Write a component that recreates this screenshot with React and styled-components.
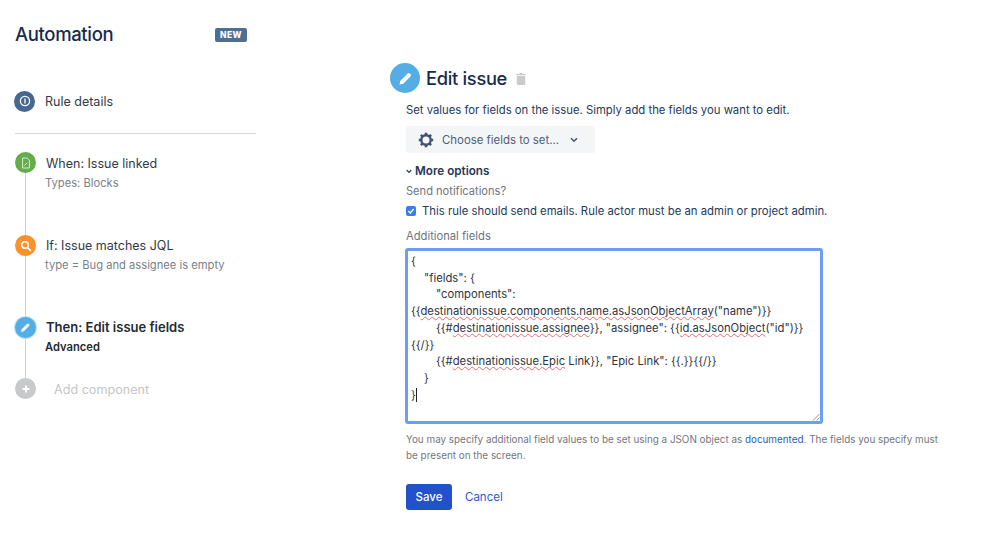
import React from "react";
import styled, { createGlobalStyle } from "styled-components";

const Global = createGlobalStyle`
  html, body { margin: 0; padding: 0; background: #fff; }
  body { font-family: Inter, "Liberation Sans", sans-serif; width: 999px; height: 549px; overflow: hidden; }
`;

const Page = styled.div`
  display: flex;
  width: 999px;
  height: 549px;
  background: #fff;
`;

const Sidebar = styled.aside`
  width: 241px;
  margin-left: 15px;
  padding-top: 22px;
  flex: none;
`;

const SideHeader = styled.div`
  display: flex;
  align-items: center;
  justify-content: space-between;
  height: 24px;
  padding-right: 9px;
`;

const AppTitle = styled.h1`
  margin: 0;
  font-size: 18.5px;
  line-height: 24px;
  font-weight: 500;
  letter-spacing: -0.35px;
  color: #172b4d;
`;

const Badge = styled.span`
  width: 32px;
  height: 14px;
  margin-top: 2px;
  border-radius: 2px;
  background: #4d6f94;
  color: #fff;
  font-size: 8.5px;
  line-height: 14px;
  font-weight: 800;
  letter-spacing: 0.4px;
  text-align: center;
`;

const DetailsRow = styled.div`
  display: flex;
  align-items: center;
  gap: 10px;
  margin-top: 44px;
  height: 22px;
  margin-left: -1px;
`;

const Circle = styled.span`
  width: ${(p) => p.$size || 21}px;
  height: ${(p) => p.$size || 21}px;
  border-radius: 50%;
  background: ${(p) => p.$bg};
  box-shadow: ${(p) => (p.$glow ? "0 0 0 1px #bfe0f5" : "none")};
  display: flex;
  align-items: center;
  justify-content: center;
  flex: none;
`;

const DetailsLabel = styled.span`
  font-size: 12.5px;
  color: #333a47;
`;

const Divider = styled.div`
  height: 1px;
  background: #d5d7da;
  margin-top: 21px;
`;

const Steps = styled.div`
  margin-top: 18px;
`;

const Step = styled.div`
  display: grid;
  grid-template-columns: 21px 1fr;
  column-gap: 10px;
  height: ${(p) => p.$h}px;
`;

const Rail = styled.div`
  display: flex;
  flex-direction: column;
  align-items: center;
`;

const Line = styled.div`
  width: 1px;
  flex: 1;
  background: #cfd1d4;
`;

const StepBody = styled.div`
  padding-top: ${(p) => p.$top || 2}px;
`;

const StepTitle = styled.div`
  font-size: ${(p) => (p.$active ? 13 : 12.5)}px;
  line-height: 17px;
  font-weight: ${(p) => (p.$active ? 600 : 400)};
  color: ${(p) => (p.$active ? "#252a33" : "#333a47")};
`;

const StepSub = styled.div`
  font-size: 11.2px;
  line-height: 14px;
  margin-top: 4px;
  margin-left: -1px;
  font-weight: ${(p) => (p.$active ? 600 : 400)};
  color: ${(p) => (p.$active ? "#252a33" : "#7a7f87")};
`;

const AddLabel = styled.div`
  font-size: 12.6px;
  line-height: 21px;
  margin-left: 8px;
  padding-top: 1px;
  color: #c4c6c9;
`;

const Main = styled.main`
  margin-left: 134px;
  padding-top: 63px;
  width: 560px;
  flex: none;
`;

const EditHeader = styled.div`
  display: flex;
  align-items: center;
  gap: 6px;
  height: 30px;
`;

const EditTitle = styled.h2`
  margin: 0;
  font-size: 18.3px;
  font-weight: 500;
  letter-spacing: -0.3px;
  color: #172b4d;
`;

const TrashWrap = styled.span`
  display: flex;
  margin-left: 3px;
  margin-top: 1px;
`;

const Content = styled.div`
  padding-left: 16px;
`;

const Intro = styled.p`
  margin: 9px 0 0;
  font-size: 11.3px;
  line-height: 16px;
  color: #253858;
`;

const ChooseButton = styled.button`
  display: flex;
  align-items: center;
  width: 189px;
  height: 27px;
  margin-top: 8px;
  padding: 0 0 0 12px;
  border: 0;
  border-radius: 3px;
  background: #f4f5f7;
  font: inherit;
  font-size: 11.4px;
  color: #505f79;
`;

const ChooseLabel = styled.span`
  margin-left: 8px;
  margin-right: 11px;
`;

const MoreRow = styled.div`
  display: flex;
  align-items: center;
  gap: 3px;
  margin-top: 10px;
  height: 16px;
  font-size: 11.7px;
  font-weight: 600;
  color: #253858;
`;

const FieldLabel = styled.div`
  font-size: ${(p) => p.$size}px;
  line-height: 16px;
  color: #6f747c;
  margin-top: ${(p) => p.$mt}px;
`;

const CheckRow = styled.label`
  display: flex;
  align-items: center;
  gap: 6px;
  margin-top: 4px;
  height: 16px;
  font-size: 11.35px;
  color: #253858;
`;

const Check = styled.span`
  width: 10px;
  height: 10px;
  border-radius: 2px;
  background: #3b7de9;
  display: flex;
  align-items: center;
  justify-content: center;
`;

const Editor = styled.div`
  position: relative;
  box-sizing: border-box;
  width: 418px;
  height: 176px;
  margin: 4px 0 0 -1px;
  padding: 2px 3px 0 3px;
  border: 3px solid #6b9ff0;
  border-radius: 3px;
  font-size: 11.25px;
  line-height: 16.7px;
  color: #2f3440;
`;

const EditorLine = styled.div`
  padding-left: ${(p) => p.$indent || 0}px;
  white-space: pre;
`;

const Spell = styled.span`
  text-decoration: underline wavy #f0686c 1px;
  text-underline-offset: 1px;
  text-decoration-skip-ink: none;
`;

const Caret = styled.span`
  display: inline-block;
  width: 1px;
  height: 14px;
  background: #222;
  vertical-align: -3px;
`;

const Grip = styled.svg`
  position: absolute;
  right: 0;
  bottom: 0;
`;

const Help = styled.p`
  margin: 7px 0 0;
  width: 540px;
  font-size: 9.9px;
  line-height: 16px;
  color: #72767d;
`;

const HelpLink = styled.a`
  color: #2a5bc7;
  text-decoration: none;
`;

const Actions = styled.div`
  display: flex;
  align-items: center;
  gap: 13px;
  margin-top: 21px;
`;

const SaveButton = styled.button`
  width: 46px;
  height: 26px;
  padding: 0;
  border: 0;
  border-radius: 3px;
  background: #2351c9;
  color: #fff;
  font: inherit;
  font-size: 11.5px;
  font-weight: 500;
`;

const CancelLink = styled.a`
  font-size: 11.5px;
  color: #2a5bc7;
`;

const Pencil = ({ s = 12 }) => (
  <svg width={s} height={s} viewBox="0 0 12 12">
    <path d="M1.2 10.8l.7-3L7.8 1.9a1 1 0 0 1 1.4 0l.9.9a1 1 0 0 1 0 1.4L4.2 10.1z" fill="#fff" />
  </svg>
);

export default function App() {
  return (
    <Page>
      <Global />
      <Sidebar>
        <SideHeader>
          <AppTitle>Automation</AppTitle>
          <Badge>NEW</Badge>
        </SideHeader>
        <DetailsRow>
          <Circle $bg="#46678f">
            <svg width="12" height="12" viewBox="0 0 12 12" fill="none">
              <circle cx="6" cy="6" r="4.6" stroke="#fff" strokeWidth="1.3" />
              <path d="M6 3.6v4.8" stroke="#fff" strokeWidth="1.3" />
            </svg>
          </Circle>
          <DetailsLabel>Rule details</DetailsLabel>
        </DetailsRow>
        <Divider />
        <Steps>
          <Step $h={83}>
            <Rail>
              <Circle $bg="#65ac4a">
                <svg width="12" height="12" viewBox="0 0 12 12" fill="none" stroke="#e6f2e0" strokeWidth="0.9">
                  <path d="M2.6 1h4.6l2.2 2.2V11H2.6z" />
                  <path d="M4.4 8.6l2.8-2.8" />
                </svg>
              </Circle>
              <Line />
            </Rail>
            <StepBody $top={3}>
              <StepTitle>When: Issue linked</StepTitle>
              <StepSub>Types: Blocks</StepSub>
            </StepBody>
          </Step>
          <Step $h={82}>
            <Rail>
              <Circle $bg="#f9912d">
                <svg width="12" height="12" viewBox="0 0 12 12" fill="none" stroke="#fff" strokeWidth="1.5">
                  <circle cx="5" cy="5" r="3.2" />
                  <path d="M7.4 7.4l3 3" strokeLinecap="round" />
                </svg>
              </Circle>
              <Line />
            </Rail>
            <StepBody>
              <StepTitle>If: Issue matches JQL</StepTitle>
              <StepSub>type = Bug and assignee is empty</StepSub>
            </StepBody>
          </Step>
          <Step $h={61}>
            <Rail>
              <Circle $bg="#54ade3" $glow>
                <Pencil s={11} />
              </Circle>
              <Line />
            </Rail>
            <StepBody>
              <StepTitle $active>Then: Edit issue fields</StepTitle>
              <StepSub $active>Advanced</StepSub>
            </StepBody>
          </Step>
          <Step $h={21}>
            <Rail>
              <Circle $bg="#c8c9cb">
                <svg width="10" height="10" viewBox="0 0 10 10">
                  <path d="M5 1.5v7M1.5 5h7" stroke="#fff" strokeWidth="1.8" />
                </svg>
              </Circle>
            </Rail>
            <AddLabel>Add component</AddLabel>
          </Step>
        </Steps>
      </Sidebar>
      <Main>
        <EditHeader>
          <Circle $bg="#54ade3" $size={30}>
            <Pencil s={15} />
          </Circle>
          <EditTitle>Edit issue</EditTitle>
          <TrashWrap>
            <svg width="10" height="12" viewBox="0 0 10 12" fill="#c9cbce">
              <path d="M3.5 0h3v1H10v1.2H0V1h3.5z" />
              <path d="M.8 3h8.4v8a1 1 0 0 1-1 1H1.8a1 1 0 0 1-1-1z" />
            </svg>
          </TrashWrap>
        </EditHeader>
        <Content>
          <Intro>Set values for fields on the issue. Simply add the fields you want to edit.</Intro>
          <ChooseButton>
            <svg width="16" height="16" viewBox="0 0 16 16">
              <circle cx="8" cy="8" r="4.7" fill="none" stroke="#44546f" strokeWidth="2.4" />
              <g stroke="#44546f" strokeWidth="2.6">
                <path d="M8 .8v2.4M8 12.8v2.4M.8 8h2.4M12.8 8h2.4M2.9 2.9l1.7 1.7M11.4 11.4l1.7 1.7M13.1 2.9l-1.7 1.7M4.6 11.4l-1.7 1.7" />
              </g>
            </svg>
            <ChooseLabel>Choose fields to set...</ChooseLabel>
            <svg width="8" height="6" viewBox="0 0 8 6" fill="none">
              <path d="M1 1.2l3 3 3-3" stroke="#44546f" strokeWidth="1.5" />
            </svg>
          </ChooseButton>
          <MoreRow>
            <svg width="6" height="5" viewBox="0 0 6 5" fill="none">
              <path d="M.7 1l2.3 2.4L5.3 1" stroke="#253858" strokeWidth="1.1" />
            </svg>
            More options
          </MoreRow>
          <FieldLabel $mt={4} $size={11.1}>Send notifications?</FieldLabel>
          <CheckRow>
            <Check>
              <svg width="8" height="8" viewBox="0 0 8 8" fill="none">
                <path d="M1.3 4l2 2 3.4-4" stroke="#fff" strokeWidth="1.4" />
              </svg>
            </Check>
            This rule should send emails. Rule actor must be an admin or project admin.
          </CheckRow>
          <FieldLabel $mt={9} $size={11.2}>Additional fields</FieldLabel>
          <Editor>
            <EditorLine>{"{"}</EditorLine>
            <EditorLine $indent={13}>"fields": {"{"}</EditorLine>
            <EditorLine $indent={25}>"components":</EditorLine>
            <EditorLine>
              {"{{"}<Spell>destinationissue.components.name.asJsonObjectArray</Spell>("name"){"}}"}
            </EditorLine>
            <EditorLine $indent={25}>
              {"{{#"}<Spell>destinationissue.assignee</Spell>{"}}"}, "assignee": {"{{"}<Spell>id.asJsonObject</Spell>("id"){"}}"}
            </EditorLine>
            <EditorLine>{"{{/}}"}</EditorLine>
            <EditorLine $indent={25}>
              {"{{#"}<Spell>destinationissue.Epic</Spell> Link{"}}"}, "Epic Link": {"{{.}}{{/}}"}
            </EditorLine>
            <EditorLine $indent={13}>{"}"}</EditorLine>
            <EditorLine>{"}"}<Caret /></EditorLine>
            <Grip width="8" height="8" viewBox="0 0 8 8" fill="none" stroke="#777" strokeWidth="0.8">
              <path d="M1 7.5L7.5 1M4.5 7.5l3-3" />
            </Grip>
          </Editor>
          <Help>
            You may specify additional field values to be set using a JSON object as <HelpLink>documented</HelpLink>. The fields you specify must be present on the screen.
          </Help>
          <Actions>
            <SaveButton>Save</SaveButton>
            <CancelLink>Cancel</CancelLink>
          </Actions>
        </Content>
      </Main>
    </Page>
  );
}
